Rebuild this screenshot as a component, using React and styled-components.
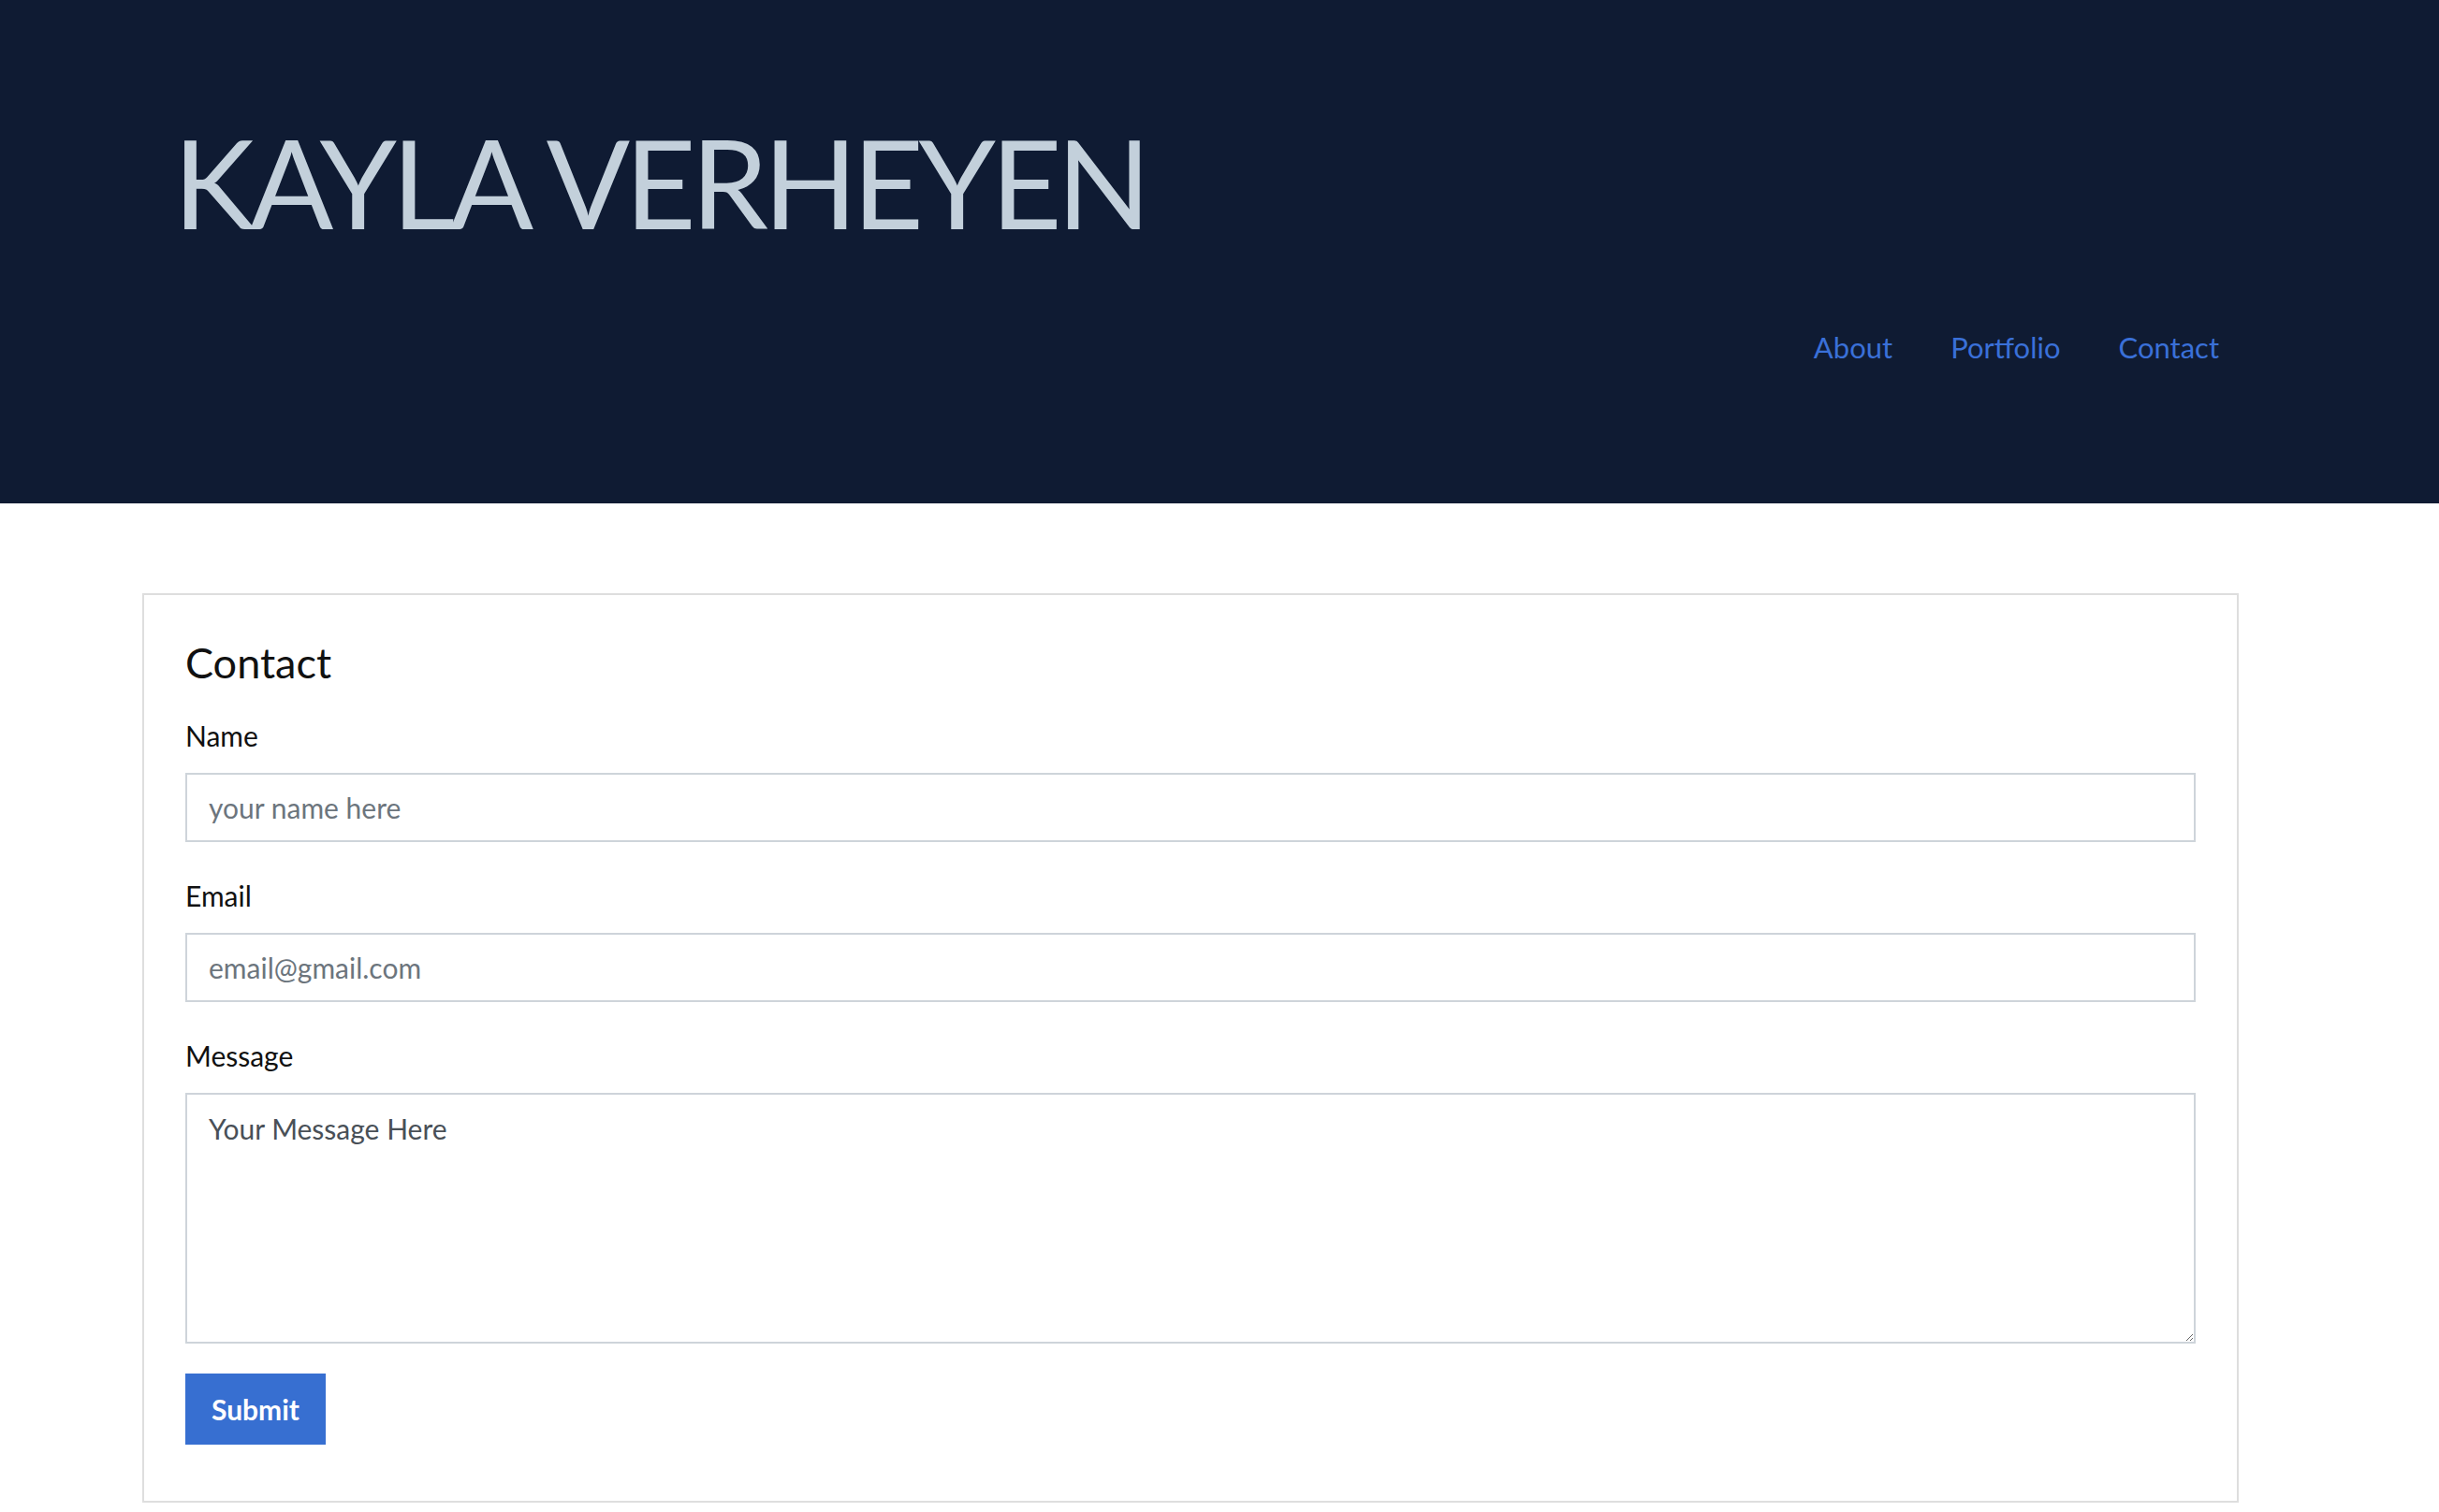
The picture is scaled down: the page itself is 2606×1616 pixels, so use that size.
import React from "react";
import styled, { createGlobalStyle } from "styled-components";

const Global = createGlobalStyle`
  html, body { margin: 0; padding: 0; background: #ffffff; }
  body { font-family: Lato, "Open Sans", sans-serif; color: #111; }
  *, *::before, *::after { box-sizing: border-box; }
`;

const Header = styled.header`
  height: 538px;
  background: #0f1b33;
  padding: 128px 0 0 185px;
  display: flex;
  flex-direction: column;
`;

const Title = styled.h1`
  margin: 0;
  font-size: 132px;
  line-height: 132px;
  font-weight: 400;
  color: #c3d0db;
  letter-spacing: -5.5px;
  white-space: nowrap;
`;

const Nav = styled.nav`
  margin-top: 96px;
  display: flex;
  justify-content: flex-end;
  padding-right: 204px;
`;

const NavLink = styled.a`
  font-size: 31px;
  line-height: 31px;
  padding: 0 31px;
  color: #3a70d8;
  text-decoration: none;
`;

const Main = styled.main`
  padding: 96px 214px 10px 152px;
`;

const Card = styled.section`
  border: 2px solid #dedede;
  padding: 50px 44px 60px 44px;
`;

const Heading = styled.h2`
  margin: 0 0 40px 0;
  font-size: 45px;
  line-height: 45px;
  font-weight: 400;
  color: #111;
`;

const Field = styled.div`
  display: flex;
  flex-direction: column;
  gap: 25px;
  margin-bottom: 42px;
`;

const Label = styled.label`
  font-size: 30px;
  line-height: 30px;
  color: #111;
`;

const Input = styled.input`
  height: 74px;
  width: 100%;
  border: 2px solid #ced4da;
  border-radius: 0;
  padding: 0 23px;
  font-family: Lato, "Open Sans", sans-serif;
  font-size: 30px;
  color: #495057;
  outline: none;
  &::placeholder { color: #6c757d; opacity: 1; }
`;

const TextArea = styled.textarea`
  height: 268px;
  width: 100%;
  border: 2px solid #ced4da;
  border-radius: 0;
  padding: 14px 23px;
  font-family: Lato, "Open Sans", sans-serif;
  font-size: 30px;
  line-height: 45px;
  color: #495057;
  outline: none;
  &::placeholder { color: #495057; opacity: 1; }
`;

const LastField = styled(Field)`
  margin-bottom: 32px;
`;

const SubmitButton = styled.button`
  width: 150px;
  height: 76px;
  border: none;
  border-radius: 0;
  background: #376fd1;
  color: #fff;
  font-family: Lato, "Open Sans", sans-serif;
  font-size: 30px;
  font-weight: 700;
  padding: 0;
  cursor: pointer;
`;

export default function App() {
  return (
    <>
      <Global />
      <Header>
        <Title>KAYLA VERHEYEN</Title>
        <Nav>
          <NavLink href="#about">About</NavLink>
          <NavLink href="#portfolio">Portfolio</NavLink>
          <NavLink href="#contact">Contact</NavLink>
        </Nav>
      </Header>
      <Main>
        <Card>
          <Heading>Contact</Heading>
          <form onSubmit={(e) => e.preventDefault()}>
            <Field>
              <Label htmlFor="name">Name</Label>
              <Input id="name" type="text" placeholder="your name here" />
            </Field>
            <Field>
              <Label htmlFor="email">Email</Label>
              <Input id="email" type="email" placeholder="email@gmail.com" />
            </Field>
            <LastField>
              <Label htmlFor="message">Message</Label>
              <TextArea id="message" placeholder="Your Message Here" />
            </LastField>
            <SubmitButton type="submit">Submit</SubmitButton>
          </form>
        </Card>
      </Main>
    </>
  );
}
